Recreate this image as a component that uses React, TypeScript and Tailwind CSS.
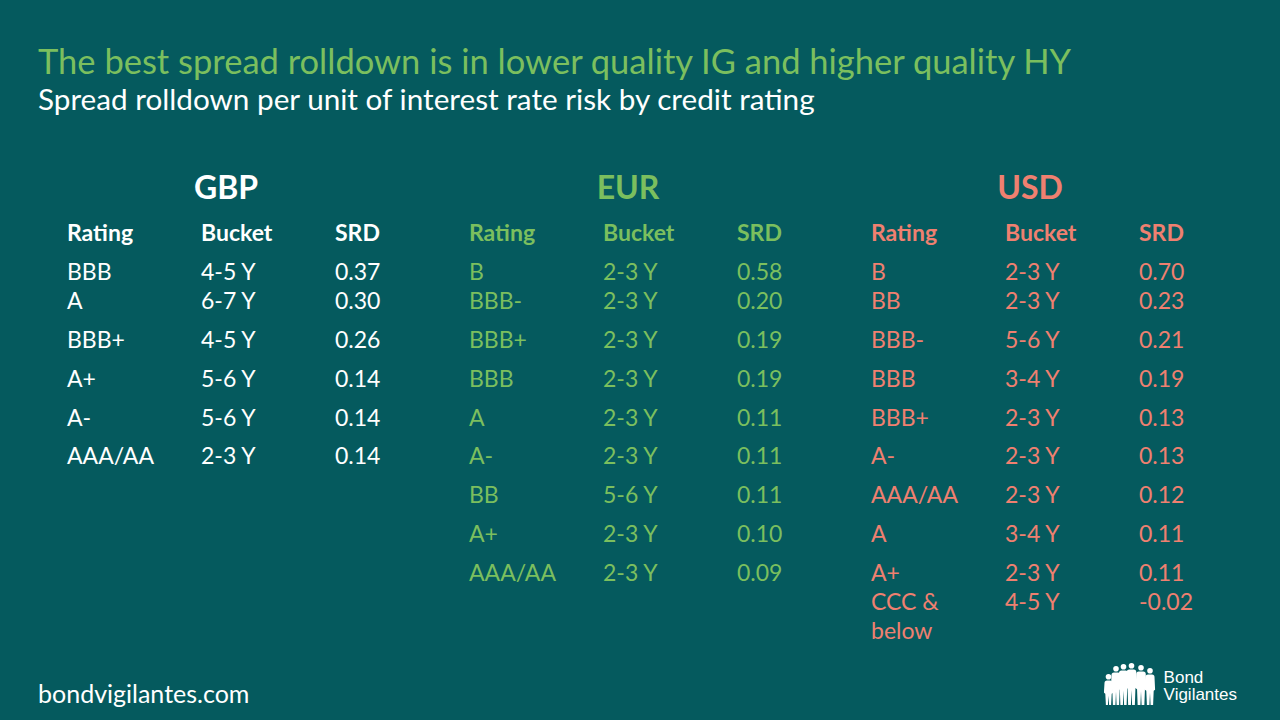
import React from 'react';

type Row = { rating: React.ReactNode; bucket: string; srd: string; tight?: boolean };

const gbp: Row[] = [
  { rating: 'BBB', bucket: '4-5 Y', srd: '0.37' },
  { rating: 'A', bucket: '6-7 Y', srd: '0.30', tight: true },
  { rating: 'BBB+', bucket: '4-5 Y', srd: '0.26' },
  { rating: 'A+', bucket: '5-6 Y', srd: '0.14' },
  { rating: 'A-', bucket: '5-6 Y', srd: '0.14' },
  { rating: 'AAA/AA', bucket: '2-3 Y', srd: '0.14' },
];

const eur: Row[] = [
  { rating: 'B', bucket: '2-3 Y', srd: '0.58' },
  { rating: 'BBB-', bucket: '2-3 Y', srd: '0.20', tight: true },
  { rating: 'BBB+', bucket: '2-3 Y', srd: '0.19' },
  { rating: 'BBB', bucket: '2-3 Y', srd: '0.19' },
  { rating: 'A', bucket: '2-3 Y', srd: '0.11' },
  { rating: 'A-', bucket: '2-3 Y', srd: '0.11' },
  { rating: 'BB', bucket: '5-6 Y', srd: '0.11' },
  { rating: 'A+', bucket: '2-3 Y', srd: '0.10' },
  { rating: 'AAA/AA', bucket: '2-3 Y', srd: '0.09' },
];

const usd: Row[] = [
  { rating: 'B', bucket: '2-3 Y', srd: '0.70' },
  { rating: 'BB', bucket: '2-3 Y', srd: '0.23', tight: true },
  { rating: 'BBB-', bucket: '5-6 Y', srd: '0.21' },
  { rating: 'BBB', bucket: '3-4 Y', srd: '0.19' },
  { rating: 'BBB+', bucket: '2-3 Y', srd: '0.13' },
  { rating: 'A-', bucket: '2-3 Y', srd: '0.13' },
  { rating: 'AAA/AA', bucket: '2-3 Y', srd: '0.12' },
  { rating: 'A', bucket: '3-4 Y', srd: '0.11' },
  { rating: 'A+', bucket: '2-3 Y', srd: '0.11' },
  {
    rating: (
      <>
        CCC &amp;
        <br />
        below
      </>
    ),
    bucket: '4-5 Y',
    srd: '-0.02',
    tight: true,
  },
];

function RatingTable({ title, rows, color }: { title: string; rows: Row[]; color: string }) {
  return (
    <div className={`w-[402px] ${color}`}>
      <h2 className="w-[318px] text-center text-[32px] font-bold leading-[40px]">{title}</h2>
      <div className="mt-[11px] grid grid-cols-[134px_134px_1fr] text-[23px] font-bold leading-[29px]">
        <span>Rating</span>
        <span>Bucket</span>
        <span>SRD</span>
      </div>
      <div className="mt-[10px] text-[23px] leading-[29px]">
        {rows.map((r, i) => (
          <div
            key={i}
            className={`grid grid-cols-[134px_134px_1fr] ${i === 0 || r.tight ? '' : 'pt-[9.85px]'}`}
          >
            <span>{r.rating}</span>
            <span>{r.bucket}</span>
            <span>{r.srd}</span>
          </div>
        ))}
      </div>
    </div>
  );
}

// one silhouette: head centre x, head top y, shoulder width
function person(cx: number, top: number, w: number) {
  const r = 2.8;
  const hy = top + r;
  const st = top + r * 2 + 0.8;
  const half = w / 2;
  const hip = st + (44 - st) * 0.5;
  return (
    <g key={`${cx}-${top}`}>
      <circle cx={cx} cy={hy} r={r} />
      <path
        d={`M${cx - half} ${st + 2.5} Q${cx - half} ${st} ${cx - half + 2.5} ${st} L${cx + half - 2.5} ${st} Q${cx + half} ${st} ${cx + half} ${st + 2.5} L${cx + half + 0.6} ${hip} L${cx + half - 0.8} ${hip + 1} L${cx + half - 1.4} 44 L${cx + 0.6} 44 L${cx} ${hip + 3} L${cx - 0.6} 44 L${cx - half + 1.4} 44 L${cx - half + 0.8} ${hip + 1} L${cx - half - 0.6} ${hip} Z`}
      />
    </g>
  );
}

function Logo() {
  return (
    <div className="flex items-center gap-[8px]">
      <svg width="52" height="46" viewBox="0 0 52 46" fill="#ffffff">
        {person(4.5, 13, 8)}
        {person(12, 5, 9)}
        {person(19.5, 3, 9)}
        {person(27.5, 2, 9.5)}
        {person(37, 4, 9.5)}
        {person(46, 7, 9)}
      </svg>
      <div
        className="pt-[3px] text-[17px] leading-[17px] text-white"
        style={{ fontFamily: '"Liberation Sans", Arial, sans-serif' }}
      >
        <div>Bond</div>
        <div>Vigilantes</div>
      </div>
    </div>
  );
}

export default function App() {
  return (
    <div
      className="relative flex h-[720px] w-[1280px] flex-col overflow-hidden bg-[#055a5e]"
      style={{ fontFamily: 'Lato, "Open Sans", sans-serif' }}
    >
      {/* Heading */}
      <div className="pl-[38px] pt-[41px]">
        <h1 className="text-[34.5px] leading-[40px] text-[#7bbf5e]">
          The best spread rolldown is in lower quality IG and higher quality HY
        </h1>
        <p className="text-[29.7px] leading-[36px] text-white">
          Spread rolldown per unit of interest rate risk by credit rating
        </p>
      </div>

      {/* Tables */}
      <div className="mt-[50px] flex pl-[67px]">
        <RatingTable title="GBP" rows={gbp} color="text-white" />
        <RatingTable title="EUR" rows={eur} color="text-[#7bbf5e]" />
        <RatingTable title="USD" rows={usd} color="text-[#ef8070]" />
      </div>

      {/* Footer */}
      <div className="mt-auto flex items-end justify-between pb-[12px] pl-[38px] pr-[43px]">
        <span className="text-[25px] leading-[30px] text-white">bondvigilantes.com</span>
        <div className="pb-[1px]">
          <Logo />
        </div>
      </div>
    </div>
  );
}
